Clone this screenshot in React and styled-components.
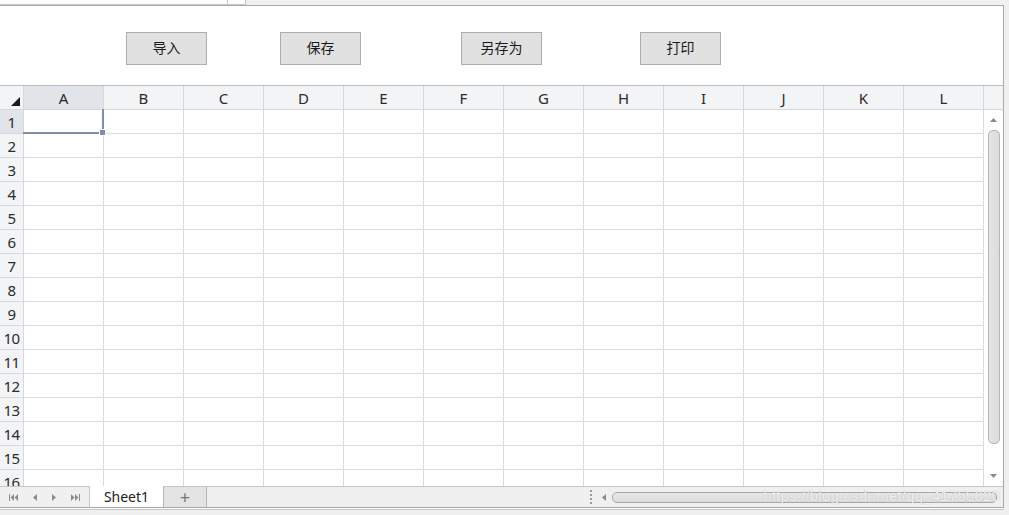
import styled, { createGlobalStyle } from "styled-components";

const GlobalStyle = createGlobalStyle`
  html, body {
    margin: 0;
    padding: 0;
    background: #f0f0f0;
    font-family: "Noto Sans", "Noto Sans CJK SC", sans-serif;
  }
  * { box-sizing: border-box; }
`;

const COLS = ["A", "B", "C", "D", "E", "F", "G", "H", "I", "J", "K", "L"];
const ROWS = Array.from({ length: 16 }, (_, i) => i + 1);

const Page = styled.div`
  width: 1009px;
  height: 515px;
  background: #f0f0f0;
  overflow: hidden;
  display: flex;
  flex-direction: column;
`;

const TopStrip = styled.div`
  height: 5px;
  display: flex;
  background: #f0f0f0;
`;

const AddressBox = styled.div`
  width: 246px;
  height: 5px;
  background: #fff;
  border-right: 1px solid #c8c8c8;
  border-bottom: 1px solid #c8c8c8;
  display: flex;
  justify-content: flex-end;
`;

const AddressDrop = styled.div`
  width: 18px;
  border-left: 1px solid #c8c8c8;
`;

const Panel = styled.div`
  width: 1004px;
  border-top: 1px solid #a8a8a8;
  border-right: 1px solid #a8a8a8;
  background: #fff;
  display: flex;
  flex-direction: column;
`;

const Toolbar = styled.div`
  height: 79px;
  display: flex;
  align-items: flex-start;
  padding-top: 26px;
  background: #fff;
`;

const Button = styled.button`
  width: 81px;
  height: 33px;
  margin-left: ${(p) => p.$gap}px;
  background: #e1e1e1;
  border: 1px solid #adadad;
  font-family: "Noto Sans CJK SC", "Noto Sans", sans-serif;
  font-size: 14px;
  line-height: 1;
  color: #1a1a1a;
  padding: 0 0 3px;
  cursor: pointer;
`;

const Sheet = styled.div`
  border-top: 1px solid #b9bdc3;
  display: flex;
  height: 401px;
`;

const GridArea = styled.div`
  width: 984px;
  display: flex;
  flex-direction: column;
  overflow: hidden;
  position: relative;
`;

const GridRow = styled.div`
  display: grid;
  grid-template-columns: 24px repeat(12, 80px);
  height: 24px;
  flex-shrink: 0;
`;

const Corner = styled.div`
  background: #f3f4f6;
  border-right: 1px solid #d5d8dd;
  border-bottom: 1px solid #d5d8dd;
  display: flex;
  align-items: flex-end;
  justify-content: flex-end;
  padding: 0 3px 3px 0;
`;

const ColHead = styled.div`
  background: ${(p) => (p.$active ? "#e1e4e8" : "#f3f4f6")};
  border-right: 1px solid #d5d8dd;
  border-bottom: 1px solid #d5d8dd;
  display: flex;
  align-items: center;
  justify-content: center;
  font-size: 15px;
  color: #2b2b2b;
`;

const RowHead = styled.div`
  background: ${(p) => (p.$active ? "#e1e4e8" : "#f3f4f6")};
  border-right: 1px solid #d5d8dd;
  border-bottom: 1px solid #d5d8dd;
  display: flex;
  align-items: center;
  justify-content: center;
  font-size: 15px;
  color: #2b2b2b;
  letter-spacing: -0.5px;
`;

const Cell = styled.div`
  border-right: 1px solid #dadcdf;
  border-bottom: 1px solid #dadcdf;
  background: #fff;
  position: relative;
`;

const Selection = styled.div`
  position: absolute;
  left: -1px;
  top: -1px;
  right: -1px;
  bottom: -1px;
  border-right: 2px solid #7d8fad;
  border-bottom: 2px solid #7d8fad;
  z-index: 2;
`;

const Handle = styled.div`
  position: absolute;
  right: -4px;
  bottom: -4px;
  width: 7px;
  height: 7px;
  background: #7d8fad;
  border: 1px solid #fff;
`;

const VScroll = styled.div`
  width: 19px;
  display: flex;
  flex-direction: column;
  align-items: center;
  background: #fff;
  padding-top: 24px;
`;

const HeadFill = styled.div`
  width: 19px;
  height: 24px;
  background: #f3f4f6;
  border-bottom: 1px solid #d5d8dd;
  margin-top: -24px;
`;

const Arrow = styled.div`
  height: 20px;
  display: flex;
  align-items: center;
  justify-content: center;
  color: #8a8a8a;
`;

const VThumb = styled.div`
  width: 12px;
  height: 314px;
  border: 1px solid #b5b5b5;
  border-radius: 5px;
  background: linear-gradient(to right, #e4e4e4, #dcdcdc);
`;

const VTrack = styled.div`
  flex: 1;
  display: flex;
  align-items: flex-start;
`;

const TabBar = styled.div`
  height: 21px;
  border-top: 1px solid #c6c6c6;
  background: #f0f0f0;
  display: flex;
  position: relative;
`;

const NavGroup = styled.div`
  width: 90px;
  display: flex;
  align-items: center;
  justify-content: space-around;
  border-right: 1px solid #c6c6c6;
  padding: 0 2px;
`;

const SheetTab = styled.div`
  width: 74px;
  background: #fff;
  border-right: 1px solid #b5b5b5;
  display: flex;
  align-items: center;
  justify-content: center;
  font-size: 14px;
  color: #222;
  margin-top: -1px;
`;

const AddTab = styled.div`
  width: 43px;
  background: #e4e4e4;
  border-right: 1px solid #b5b5b5;
  display: flex;
  align-items: center;
  justify-content: center;
  font-size: 18px;
  color: #777;
  line-height: 1;
`;

const Spacer = styled.div`
  width: 383px;
`;

const Splitter = styled.div`
  width: 4px;
  margin: 3px 0;
  border-left: 2px dotted #9a9a9a;
`;

const HScroll = styled.div`
  flex: 1;
  display: flex;
  align-items: center;
  gap: 6px;
  padding: 0 6px 0 8px;
`;

const HThumb = styled.div`
  flex: 1;
  height: 11px;
  border: 1px solid #a9a9a9;
  border-radius: 5px;
  background: linear-gradient(#e8e8e8, #dcdcdc);
`;

const Watermark = styled.span`
  position: absolute;
  right: 3px;
  top: 0;
  font-family: "Liberation Sans", sans-serif;
  font-size: 15px;
  color: rgba(255, 255, 255, 0.85);
  text-shadow: 0 0 1px rgba(120, 120, 120, 0.6);
  letter-spacing: 0.2px;
`;

const BottomEdge = styled.div`
  width: 1004px;
  height: 3px;
  border-top: 1px solid #a8a8a8;
  border-bottom: 1px solid #c6c6c6;
  background: #fff;
`;

const Triangle = () => (
  <svg width="9" height="9" viewBox="0 0 9 9">
    <polygon points="9,0 9,9 0,9" fill="#1a1a1a" />
  </svg>
);

const NavIcon = ({ type }) => {
  const c = "#8c8c8c";
  if (type === "first")
    return (
      <svg width="9" height="7" viewBox="0 0 9 7">
        <rect x="0" y="0" width="1" height="7" fill={c} />
        <polygon points="5,0 1.5,3.5 5,7" fill={c} />
        <polygon points="9,0 5.5,3.5 9,7" fill={c} />
      </svg>
    );
  if (type === "prev")
    return (
      <svg width="4" height="7" viewBox="0 0 4 7">
        <polygon points="4,0 0,3.5 4,7" fill={c} />
      </svg>
    );
  if (type === "next")
    return (
      <svg width="4" height="7" viewBox="0 0 4 7">
        <polygon points="0,0 4,3.5 0,7" fill={c} />
      </svg>
    );
  return (
    <svg width="9" height="7" viewBox="0 0 9 7">
      <polygon points="0,0 3.5,3.5 0,7" fill={c} />
      <polygon points="4,0 7.5,3.5 4,7" fill={c} />
      <rect x="8" y="0" width="1" height="7" fill={c} />
    </svg>
  );
};

const Caret = ({ dir }) => {
  const pts = {
    up: "0,4 3.5,0 7,4",
    down: "0,0 3.5,4 7,0",
    left: "4,0 0,3.5 4,7",
  }[dir];
  const w = dir === "left" ? 4 : 7;
  const h = dir === "left" ? 7 : 4;
  return (
    <svg width={w} height={h} viewBox={`0 0 ${w} ${h}`}>
      <polygon points={pts} fill="#8a8a8a" />
    </svg>
  );
};

const buttons = [
  { label: "导入", gap: 126 },
  { label: "保存", gap: 73 },
  { label: "另存为", gap: 100 },
  { label: "打印", gap: 98 },
];

export default function App() {
  return (
    <Page>
      <GlobalStyle />
      <TopStrip>
        <AddressBox>
          <AddressDrop />
        </AddressBox>
      </TopStrip>
      <Panel>
        <Toolbar>
          {buttons.map((b) => (
            <Button key={b.label} $gap={b.gap}>
              {b.label}
            </Button>
          ))}
        </Toolbar>
        <Sheet>
          <GridArea>
            <GridRow>
              <Corner>
                <Triangle />
              </Corner>
              {COLS.map((c, i) => (
                <ColHead key={c} $active={i === 0}>
                  {c}
                </ColHead>
              ))}
            </GridRow>
            {ROWS.map((r) => (
              <GridRow key={r}>
                <RowHead $active={r === 1}>{r}</RowHead>
                {COLS.map((c) => (
                  <Cell key={c}>
                    {r === 1 && c === "A" && (
                      <Selection>
                        <Handle />
                      </Selection>
                    )}
                  </Cell>
                ))}
              </GridRow>
            ))}
          </GridArea>
          <VScroll>
            <HeadFill />
            <Arrow>
              <Caret dir="up" />
            </Arrow>
            <VTrack>
              <VThumb />
            </VTrack>
            <Arrow>
              <Caret dir="down" />
            </Arrow>
          </VScroll>
        </Sheet>
        <TabBar>
          <NavGroup>
            <NavIcon type="first" />
            <NavIcon type="prev" />
            <NavIcon type="next" />
            <NavIcon type="last" />
          </NavGroup>
          <SheetTab>Sheet1</SheetTab>
          <AddTab>+</AddTab>
          <Spacer />
          <Splitter />
          <HScroll>
            <Caret dir="left" />
            <HThumb />
          </HScroll>
          <Watermark>https://blog.csdn.net/qq_41755620</Watermark>
        </TabBar>
        <BottomEdge />
      </Panel>
    </Page>
  );
}
